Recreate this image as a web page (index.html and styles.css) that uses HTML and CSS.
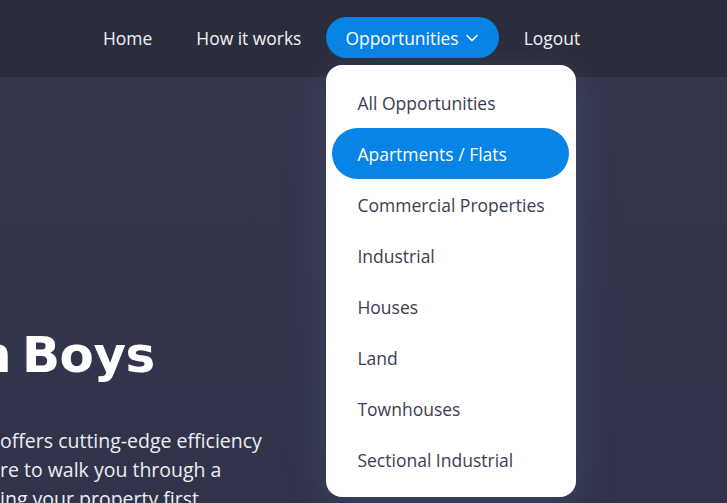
FILE: index.html
```html
<!DOCTYPE html>
<html lang="en">
<head>
<meta charset="utf-8">
<title>Opportunities</title>
<link rel="stylesheet" href="styles.css">
</head>
<body>
<header class="topbar">
  <nav class="nav">
    <a class="nav-item" href="#">Home</a>
    <a class="nav-item" href="#">How it works</a>
    <div class="nav-drop">
      <a class="nav-item active" href="#">Opportunities
        <svg class="chev" width="12" height="8" viewBox="0 0 12 8"><path d="M1 1.5 L6 6.5 L11 1.5" fill="none" stroke="#fff" stroke-width="1.5" stroke-linecap="round" stroke-linejoin="round"/></svg>
      </a>
      <ul class="menu">
        <li class="menu-item">All Opportunities</li>
        <li class="menu-item selected">Apartments / Flats</li>
        <li class="menu-item">Commercial Properties</li>
        <li class="menu-item">Industrial</li>
        <li class="menu-item">Houses</li>
        <li class="menu-item">Land</li>
        <li class="menu-item">Townhouses</li>
        <li class="menu-item">Sectional Industrial</li>
      </ul>
    </div>
    <a class="nav-item" href="#">Logout</a>
  </nav>
</header>
<main class="hero">
  <h1 class="hero-title">n Boys</h1>
  <p class="hero-text">offers cutting-edge efficiency<br>re to walk you through a<br>ing your property first</p>
</main>
</body>
</html>
```
FILE: styles.css
```css
* { box-sizing: border-box; }
html, body {
  margin: 0;
  padding: 0;
  height: 100%;
  overflow: hidden;
}
body {
  background: #31334a;
  font-family: "Open Sans", "Liberation Sans", sans-serif;
  color: #fff;
}
.topbar {
  height: 77px;
  background: #2b2d3c;
  padding-top: 17px;
  position: relative;
  z-index: 2;
}
.nav {
  display: flex;
  align-items: flex-start;
  gap: 6px;
  margin-left: 84px;
}
.nav-item {
  display: flex;
  align-items: center;
  gap: 7px;
  height: 41px;
  padding: 0 19px;
  border-radius: 21px;
  color: #f2f3f7;
  text-decoration: none;
  font-size: 17.45px;
  font-weight: 500;
  white-space: nowrap;
}
.nav-item.active {
  background: #0784e6;
  color: #fff;
  padding-right: 21px;
}
.chev { margin-top: 1px; }
.nav-drop {
  position: relative;
}
.menu {
  position: absolute;
  left: 0;
  top: 48px;
  width: 250px;
  margin: 0;
  padding: 12px 7px 12px 6px;
  list-style: none;
  background: #fff;
  border-radius: 16px;
  box-shadow: 0 6px 40px rgba(120, 130, 180, 0.22);
}
.menu-item {
  height: 51px;
  display: flex;
  align-items: center;
  padding-left: 25px;
  border-radius: 26px;
  color: #3b3e50;
  font-size: 17.5px;
  white-space: nowrap;
}
.menu-item.selected {
  background: #0784e6;
  color: #fff;
}
.hero {
  background: linear-gradient(180deg, #34364c 0%, #31334a 100%);
  height: calc(100% - 77px);
  padding-top: 248px;
}
.hero-title {
  margin: 0 0 0 -24px;
  font-family: "DejaVu Sans", "Open Sans", sans-serif;
  font-weight: 700;
  font-size: 50px;
  line-height: 60px;
  letter-spacing: -0.5px;
  word-spacing: -6px;
  color: #fff;
}
.hero-text {
  margin: 41px 0 0 0;
  font-size: 19.5px;
  line-height: 29px;
  color: #eceef3;
}
```
